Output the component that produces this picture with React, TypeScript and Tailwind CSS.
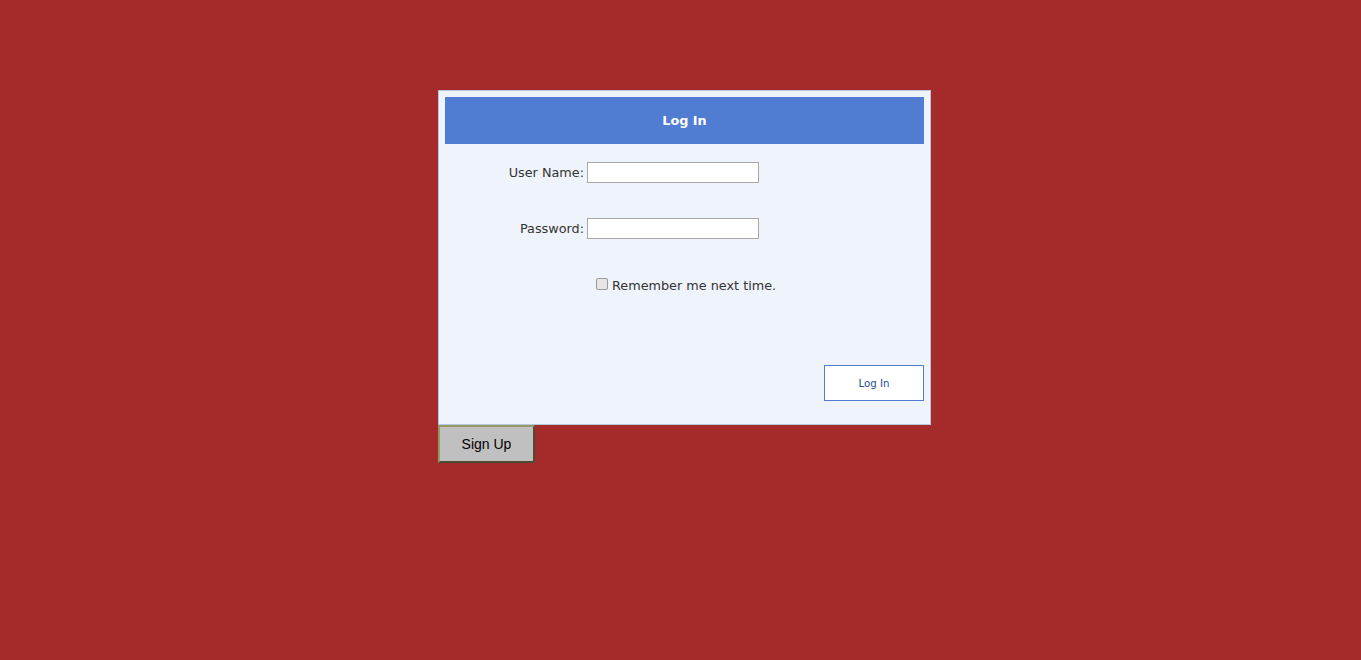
const font = "font-['Verdana','DejaVu_Sans',sans-serif]";

export default function App() {
  return (
    <div className="h-[660px] w-full bg-[#a52a2a] pl-[438px] pt-[90px]">
      <div className={`w-[493px] border border-[#b5c7de] bg-[#eff3fb] p-[6px] text-[12.8px] text-[#333333] ${font}`}>
        <div className="flex h-[47px] items-center justify-center bg-[#507cd1] font-bold text-white">
          Log In
        </div>

        <div className="mt-[18px] grid grid-cols-[139px_172px] items-center gap-x-[3px] gap-y-[35px]">
          <label htmlFor="user" className="text-right">
            User Name:
          </label>
          <input
            id="user"
            type="text"
            className="h-[21px] w-[172px] border border-[#a9a9a9] bg-white outline-none"
          />
          <label htmlFor="pass" className="text-right">
            Password:
          </label>
          <input
            id="pass"
            type="password"
            className="h-[21px] w-[172px] border border-[#a9a9a9] bg-white outline-none"
          />
        </div>

        <div className="mt-[34px] flex items-center pl-[151px]">
          <input
            id="remember"
            type="checkbox"
            className="m-0 h-[12px] w-[12px] appearance-none rounded-[2px] border border-[#9a9a9a] bg-[#e6e6e6]"
          />
          <label htmlFor="remember" className="ml-[4px] mt-[3px]">
            Remember me next time.
          </label>
        </div>

        <div className="mt-[70px] mb-[17px] flex justify-end">
          <button className={`h-[36px] w-[100px] border border-[#507cd1] bg-white text-[10.24px] text-[#284e98] ${font}`}>
            Log In
          </button>
        </div>
      </div>

      <button className="h-[38px] w-[97px] border-2 border-t-[#999966] border-l-[#999966] border-b-[#4d4d33] border-r-[#4d4d33] bg-[#c0c0c0] font-['Arial','Liberation_Sans',sans-serif] text-[14px] text-black">
        Sign Up
      </button>
    </div>
  );
}
